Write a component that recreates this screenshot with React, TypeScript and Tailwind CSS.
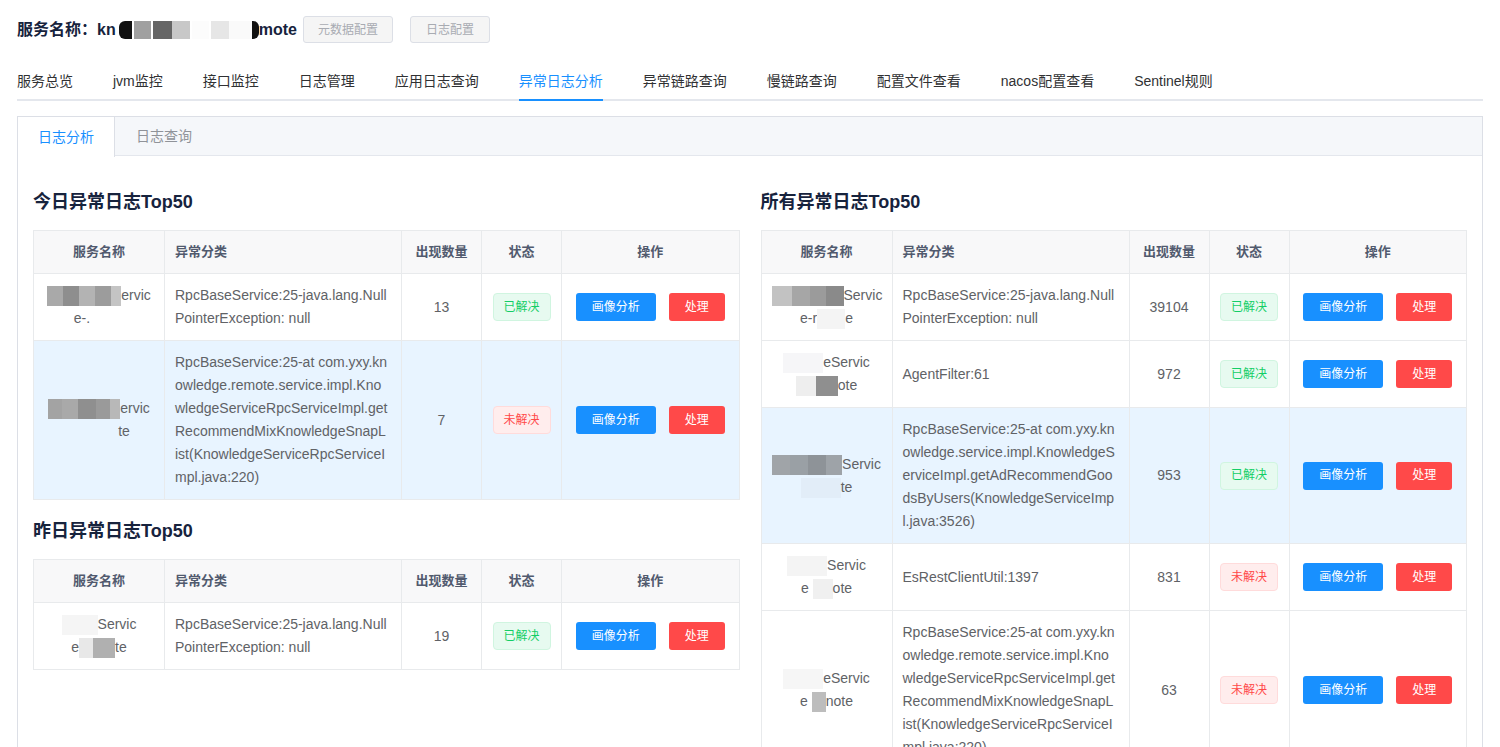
import React from 'react';

type Seg = string | { w: number; c: string };
type Row = {
  name: [Seg[], Seg[]];
  type: string[];
  count: number;
  solved: boolean;
  active?: boolean;
};

const NULL_PTR = ['RpcBaseService:25-java.lang.Null', 'PointerException: null'];
const MIX_SNAP = [
  'RpcBaseService:25-at com.yxy.kn',
  'owledge.remote.service.impl.Kno',
  'wledgeServiceRpcServiceImpl.get',
  'RecommendMixKnowledgeSnapL',
  'ist(KnowledgeServiceRpcServiceI',
  'mpl.java:220)',
];

const todayRows: Row[] = [
  {
    name: [
      [{ w: 16, c: '#a9a9a9' }, { w: 16, c: '#8e8e8e' }, { w: 16, c: '#b3b3b3' }, { w: 16, c: '#9c9c9c' }, { w: 10, c: '#c4c4c4' }, 'ervic'],
      ['e-.', { w: 34, c: 'transparent' }],
    ],
    type: NULL_PTR,
    count: 13,
    solved: true,
  },
  {
    name: [
      [{ w: 14, c: '#a3a3a3' }, { w: 16, c: '#a9a9a9' }, { w: 18, c: '#8f8f8f' }, { w: 14, c: '#9a9a9a' }, { w: 10, c: '#b8b8b8' }, 'ervic'],
      [{ w: 50, c: 'transparent' }, 'te'],
    ],
    type: MIX_SNAP,
    count: 7,
    solved: false,
    active: true,
  },
];

const yesterdayRows: Row[] = [
  {
    name: [
      [{ w: 36, c: '#f5f5f5' }, 'Servic'],
      ['e', { w: 14, c: '#e8e8e8' }, { w: 22, c: '#b0b0b0' }, 'te'],
    ],
    type: NULL_PTR,
    count: 19,
    solved: true,
  },
];

const allRows: Row[] = [
  {
    name: [
      [{ w: 20, c: '#c2c2c2' }, { w: 18, c: '#a6a6a6' }, { w: 16, c: '#9b9b9b' }, { w: 18, c: '#8a8a8a' }, 'Servic'],
      ['e-r', { w: 28, c: '#f4f4f4' }, 'e'],
    ],
    type: NULL_PTR,
    count: 39104,
    solved: true,
  },
  {
    name: [
      [{ w: 40, c: '#f6f6f8' }, 'eServic'],
      [{ w: 20, c: '#eeeeee' }, { w: 22, c: '#8f8f8f' }, 'ote'],
    ],
    type: ['AgentFilter:61'],
    count: 972,
    solved: true,
  },
  {
    name: [
      [{ w: 18, c: '#a0a4a8' }, { w: 18, c: '#9aa0a5' }, { w: 18, c: '#8e9398' }, { w: 16, c: '#9ea3a8' }, 'Servic'],
      [{ w: 40, c: '#e2edf8' }, 'te'],
    ],
    type: [
      'RpcBaseService:25-at com.yxy.kn',
      'owledge.service.impl.KnowledgeS',
      'erviceImpl.getAdRecommendGoo',
      'dsByUsers(KnowledgeServiceImp',
      'l.java:3526)',
    ],
    count: 953,
    solved: true,
    active: true,
  },
  {
    name: [
      [{ w: 40, c: '#f4f4f4' }, 'Servic'],
      ['e ', { w: 20, c: '#f0f0f0' }, 'ote'],
    ],
    type: ['EsRestClientUtil:1397'],
    count: 831,
    solved: false,
  },
  {
    name: [
      [{ w: 40, c: '#f6f6f6' }, 'eServic'],
      ['e ', { w: 14, c: '#bdbdbd' }, 'note'],
    ],
    type: MIX_SNAP,
    count: 63,
    solved: false,
  },
];

const navTabs = ['服务总览', 'jvm监控', '接口监控', '日志管理', '应用日志查询', '异常日志分析', '异常链路查询', '慢链路查询', '配置文件查看', 'nacos配置查看', 'Sentinel规则'];

function Segs({ segs }: { segs: Seg[] }) {
  return (
    <div>
      {segs.map((s, i) =>
        typeof s === 'string' ? (
          <span key={i}>{s}</span>
        ) : (
          <span key={i} className="inline-block h-[20px] align-middle" style={{ width: s.w, background: s.c }} />
        )
      )}
    </div>
  );
}

function StatusTag({ solved }: { solved: boolean }) {
  return solved ? (
    <span className="inline-flex h-[28px] w-[58px] items-center justify-center rounded-[4px] border border-[#d0f5e0] bg-[#e7faf0] text-[12px] text-[#13ce66]">
      已解决
    </span>
  ) : (
    <span className="inline-flex h-[28px] w-[58px] items-center justify-center rounded-[4px] border border-[#ffdbdb] bg-[#ffeded] text-[12px] text-[#ff4949]">
      未解决
    </span>
  );
}

function LogTable({ rows }: { rows: Row[] }) {
  return (
    <table className="w-full table-fixed border-collapse border border-[#e8eaec] text-[14px] text-[#606266]">
      <colgroup>
        <col className="w-[131px]" />
        <col className="w-[237px]" />
        <col className="w-[80px]" />
        <col className="w-[80px]" />
        <col />
      </colgroup>
      <thead>
        <tr className="bg-[#f8f8f9] text-[13px] font-bold text-[#515a6e]">
          <th className="border border-[#e8eaec] px-[10px] py-[10px] text-center font-bold leading-[22px]">服务名称</th>
          <th className="border border-[#e8eaec] px-[10px] py-[10px] text-left font-bold leading-[22px]">异常分类</th>
          <th className="border border-[#e8eaec] px-[10px] py-[10px] text-center font-bold leading-[22px]">出现数量</th>
          <th className="border border-[#e8eaec] px-[10px] py-[10px] text-center font-bold leading-[22px]">状态</th>
          <th className="border border-[#e8eaec] px-[10px] py-[10px] text-center font-bold leading-[22px]">操作</th>
        </tr>
      </thead>
      <tbody>
        {rows.map((r, i) => (
          <tr key={i} className={r.active ? 'bg-[#e8f4ff]' : 'bg-white'}>
            <td className="border border-[#e8eaec] px-[10px] py-[10px] text-center leading-[23px] whitespace-nowrap overflow-hidden">
              <Segs segs={r.name[0]} />
              <Segs segs={r.name[1]} />
            </td>
            <td className="border border-[#e8eaec] px-[10px] py-[10px] text-left leading-[23px] whitespace-nowrap overflow-hidden">
              {r.type.map((l, j) => (
                <div key={j}>{l}</div>
              ))}
            </td>
            <td className="border border-[#e8eaec] px-[10px] py-[10px] text-center leading-[23px]">{r.count}</td>
            <td className="border border-[#e8eaec] px-[10px] py-[10px] text-center leading-[23px]">
              <StatusTag solved={r.solved} />
            </td>
            <td className="border border-[#e8eaec] px-[10px] py-[10px] text-center leading-[23px]">
              <div className="flex items-center justify-center gap-[13px]">
                <button className="h-[28px] w-[80px] rounded-[3px] bg-[#1890ff] text-[12px] text-white">画像分析</button>
                <button className="h-[28px] w-[56px] rounded-[3px] bg-[#ff4949] text-[12px] text-white">处理</button>
              </div>
            </td>
          </tr>
        ))}
      </tbody>
    </table>
  );
}

function SectionTitle({ children }: { children: React.ReactNode }) {
  return <div className="flex h-[59px] items-center pt-[4px] text-[18px] font-bold text-[#17233d]">{children}</div>;
}

export default function App() {
  return (
    <div className="h-[747px] overflow-hidden bg-white px-[17px] font-['Liberation_Sans','Noto_Sans_CJK_SC',sans-serif]">
      {/* Header */}
      <div className="mt-[16px] flex h-[27px] items-center">
        <span className="text-[16px] font-bold text-[#17233d]">服务名称：</span>
        <span className="flex items-center text-[16px] font-bold text-[#17233d]">
          kn
          <span className="ml-[3px] inline-block h-[18px] w-[13px] rounded-l-[6px] bg-[#111]" />
          <span className="ml-[2px] inline-block h-[18px] w-[17px] bg-[#a0a0a0]" />
          <span className="ml-[2px] inline-block h-[18px] w-[19px] bg-[#666]" />
          <span className="inline-block h-[18px] w-[18px] bg-[#c8c8c8]" />
          <span className="ml-[2px] inline-block h-[18px] w-[17px] bg-[#fcfcfc]" />
          <span className="ml-[2px] inline-block h-[18px] w-[18px] bg-[#e6e6e6]" />
          <span className="inline-block h-[18px] w-[23px] bg-[#fafafa]" />
          <span className="inline-block h-[18px] w-[7px] rounded-r-[6px] bg-[#111]" />
          mote
        </span>
        <button className="ml-[6px] h-[27px] w-[90px] rounded-[3px] border border-[#dcdfe6] bg-[#f5f5f5] text-[12px] text-[#a8abb2]">元数据配置</button>
        <button className="ml-[17px] h-[27px] w-[80px] rounded-[3px] border border-[#dcdfe6] bg-[#f5f5f5] text-[12px] text-[#a8abb2]">日志配置</button>
      </div>

      {/* Nav tabs */}
      <div className="mt-[18px] flex border-b-2 border-[#e4e7ed]">
        {navTabs.map((t, i) => (
          <div
            key={t}
            className={`relative -mb-[2px] h-[40px] text-[14px] leading-[40px] ${i === 0 ? 'pr-[20px]' : 'px-[20px]'} ${i === 5 ? 'text-[#1890ff]' : 'text-[#303133]'}`}
          >
            {t}
            {i === 5 && <span className="absolute bottom-0 left-[20px] right-[20px] h-[2px] bg-[#1890ff]" />}
          </div>
        ))}
      </div>

      {/* Card */}
      <div className="mt-[15px] border border-[#dcdfe6] bg-white">
        <div className="flex h-[39px] border-b border-[#e4e7ed] bg-[#f5f7fa] text-[14px]">
          <div className="-mb-[1px] flex h-[40px] items-center border-r border-[#dcdfe6] bg-white px-[20px] text-[#1890ff]">日志分析</div>
          <div className="flex h-[39px] items-center px-[21px] text-[#909399]">日志查询</div>
        </div>
        <div className="grid grid-cols-2 gap-x-[21px] px-[15px] pt-[15px]">
          <div>
            <SectionTitle>今日异常日志Top50</SectionTitle>
            <LogTable rows={todayRows} />
            <SectionTitle>昨日异常日志Top50</SectionTitle>
            <LogTable rows={yesterdayRows} />
          </div>
          <div>
            <SectionTitle>所有异常日志Top50</SectionTitle>
            <LogTable rows={allRows} />
          </div>
        </div>
      </div>
    </div>
  );
}
